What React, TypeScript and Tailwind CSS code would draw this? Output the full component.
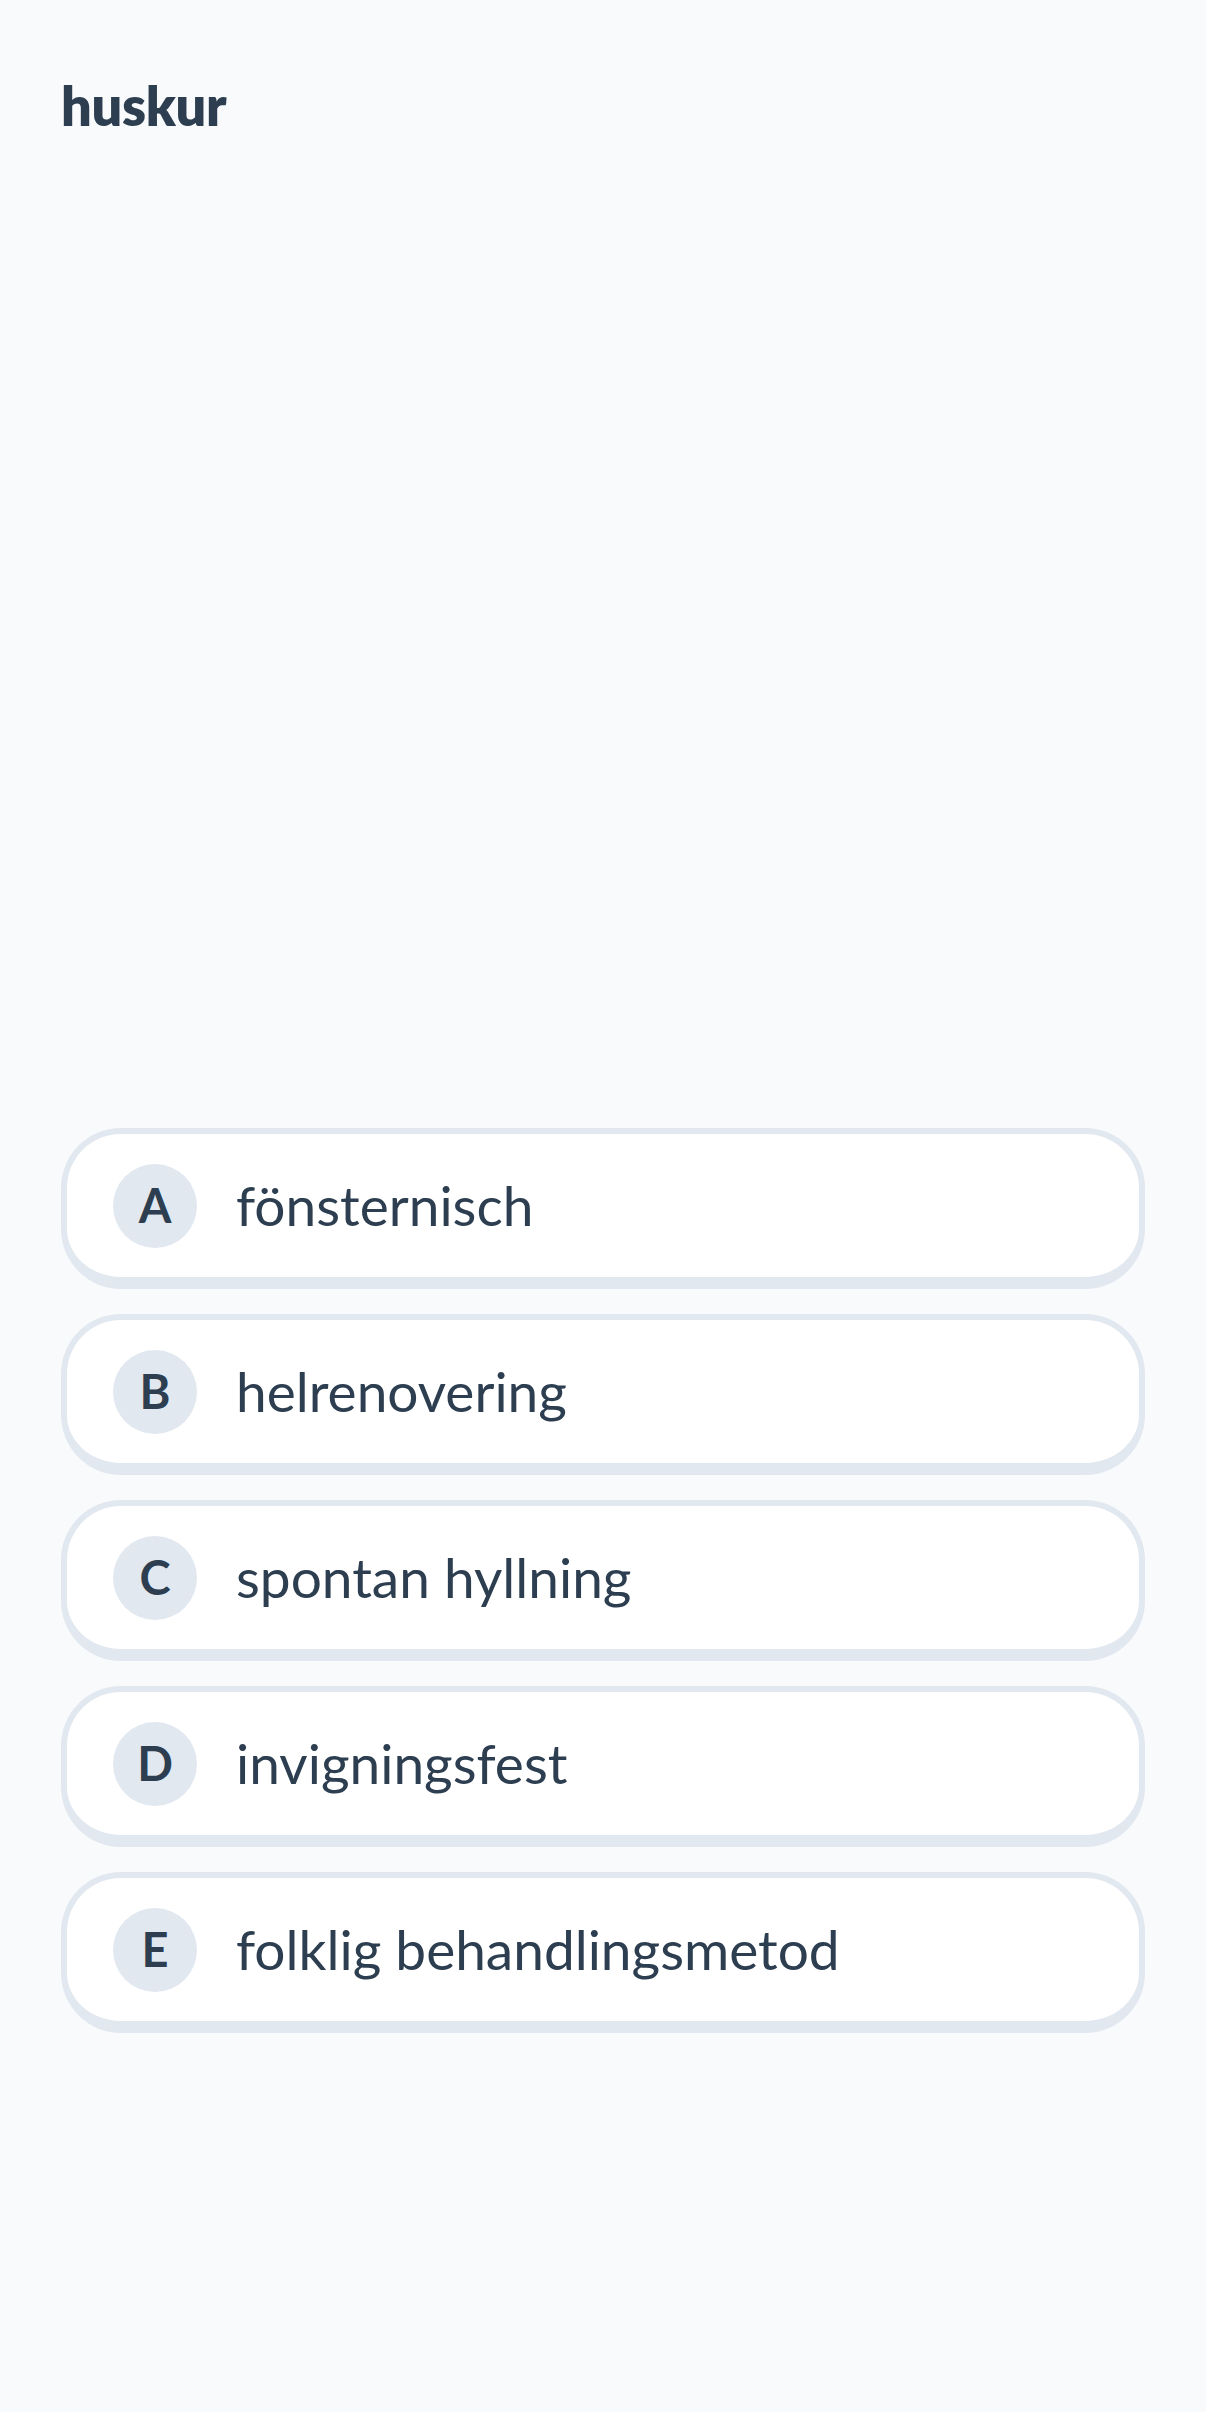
import React from "react";

const options = [
  { letter: "A", text: "fönsternisch" },
  { letter: "B", text: "helrenovering" },
  { letter: "C", text: "spontan hyllning" },
  { letter: "D", text: "invigningsfest" },
  { letter: "E", text: "folklig behandlingsmetod" },
];

export default function App() {
  return (
    <div
      className="min-h-[2412px] w-full bg-[#f8fafc] flex flex-col text-[#2c3e50]"
      style={{ fontFamily: "Lato, 'Open Sans', sans-serif" }}
    >
      <header className="px-[61px] pt-[76px]">
        <h1 className="text-[54px] font-extrabold leading-[60px] tracking-[-0.3px]">huskur</h1>
      </header>
      <div className="h-[992px]" />
      <div className="px-[61px] flex flex-col gap-[25px]">
        {options.map((o) => (
          <button
            key={o.letter}
            className="w-full h-[161px] bg-white border-[6px] border-b-[12px] border-[#e2e8f0] rounded-[60px] flex items-center pl-[46px] text-left"
          >
            <span className="w-[84px] h-[84px] rounded-full bg-[#e2e8f0] flex items-center justify-center text-[47px] font-bold shrink-0">
              {o.letter}
            </span>
            <span className="ml-[39px] text-[55px] leading-none">{o.text}</span>
          </button>
        ))}
      </div>
    </div>
  );
}
